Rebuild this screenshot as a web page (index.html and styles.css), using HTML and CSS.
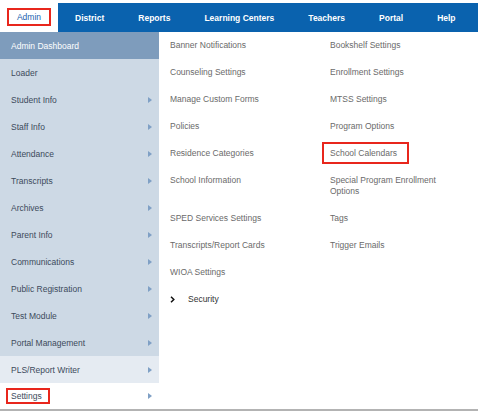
FILE: index.html
```html
<!DOCTYPE html>
<html lang="en">
<head>
<meta charset="utf-8">
<title>Admin Settings Menu</title>
<link rel="stylesheet" href="styles.css">
</head>
<body>
<div class="page">
  <nav class="topnav">
    <div class="tab-admin"><span class="hl hl-admin">Admin</span></div>
    <ul class="navbar">
      <li>District</li>
      <li>Reports</li>
      <li>Learning Centers</li>
      <li>Teachers</li>
      <li>Portal</li>
      <li>Help</li>
    </ul>
  </nav>
  <div class="menu">
    <ul class="side">
      <li class="side-item active">Admin Dashboard</li>
      <li class="side-item">Loader</li>
      <li class="side-item has-sub">Student Info<i class="tri"></i></li>
      <li class="side-item has-sub">Staff Info<i class="tri"></i></li>
      <li class="side-item has-sub">Attendance<i class="tri"></i></li>
      <li class="side-item has-sub">Transcripts<i class="tri"></i></li>
      <li class="side-item has-sub">Archives<i class="tri"></i></li>
      <li class="side-item has-sub">Parent Info<i class="tri"></i></li>
      <li class="side-item has-sub">Communications<i class="tri"></i></li>
      <li class="side-item has-sub">Public Registration<i class="tri"></i></li>
      <li class="side-item has-sub">Test Module<i class="tri"></i></li>
      <li class="side-item has-sub">Portal Management<i class="tri"></i></li>
      <li class="side-item has-sub light">PLS/Report Writer<i class="tri"></i></li>
      <li class="side-item has-sub white last"><span class="hl hl-settings">Settings</span><i class="tri"></i></li>
    </ul>
    <div class="panel">
      <div class="cell">Banner Notifications</div>
      <div class="cell">Counseling Settings</div>
      <div class="cell">Manage Custom Forms</div>
      <div class="cell">Policies</div>
      <div class="cell">Residence Categories</div>
      <div class="cell">School Information</div>
      <div class="cell">SPED Services Settings</div>
      <div class="cell">Transcripts/Report Cards</div>
      <div class="cell">WIOA Settings</div>
      <div class="cell security"><svg class="chev" width="5" height="7" viewBox="0 0 5 7"><path d="M1 0.8 L3.8 3.5 L1 6.2" fill="none" stroke="#111" stroke-width="1.5"/></svg>Security</div>
      <div class="cell">Bookshelf Settings</div>
      <div class="cell">Enrollment Settings</div>
      <div class="cell">MTSS Settings</div>
      <div class="cell">Program Options</div>
      <div class="cell"><span class="hl hl-cal">School Calendars</span></div>
      <div class="cell">Special Program Enrollment Options</div>
      <div class="cell">Tags</div>
      <div class="cell">Trigger Emails</div>
    </div>
  </div>
</div>
</body>
</html>
```
FILE: styles.css
```css
* { box-sizing: border-box; }
html, body { margin: 0; padding: 0; background: #fff; }
body {
  font-family: "Liberation Sans", Arial, Helvetica, sans-serif;
  font-size: 8.5px;
  width: 478px;
  height: 411px;
  overflow: hidden;
}
ul { list-style: none; margin: 0; padding: 0; }

.topnav {
  display: flex;
  height: 32px;
}
.tab-admin {
  width: 58px;
  display: flex;
  align-items: center;
  justify-content: center;
  padding-top: 3px;
  color: #2262b0;
}
.navbar {
  flex: 1;
  margin-top: 3px;
  height: 29px;
  background: #0a62ae;
  display: flex;
  align-items: center;
}
.navbar li {
  color: #fff;
  font-weight: bold;
  font-size: 8.5px;
  padding: 0 17px;
  white-space: nowrap;
}

.hl {
  position: relative;
  display: inline-block;
  line-height: 11px;
}
.hl::after {
  content: "";
  position: absolute;
  border: 2px solid #e8261c;
}
.hl-admin::after { left: -10px; right: -10px; top: -4px; bottom: -3px; }
.hl-settings::after { left: -5px; right: -8px; top: -3px; bottom: -2px; }
.hl-cal::after { left: -8px; right: -12px; top: -6px; bottom: -5px; }

.menu {
  display: flex;
  border-bottom: 2px solid #b3b3b3;
}
.side {
  width: 159px;
  background: #cdd9e5;
}
.side-item {
  height: 27px;
  display: flex;
  align-items: center;
  justify-content: space-between;
  padding: 0 7px 0 11px;
  color: #3c4a5b;
}
.side-item.active { background: #7e9cbc; color: #fff; }
.side-item.light { background: #e5ebf2; }
.side-item.white { background: #fff; }
.side-item.last { height: 26px; }
.tri {
  width: 0;
  height: 0;
  border-left: 4px solid #7fa0c5;
  border-top: 3px solid transparent;
  border-bottom: 3px solid transparent;
}

.panel {
  flex: 1;
  padding-left: 11px;
  display: grid;
  grid-template-columns: 160px 132px;
  grid-template-rows: repeat(10, auto);
  grid-auto-flow: column;
  align-content: start;
}
.cell {
  padding: 8px 0;
  line-height: 11px;
  color: #6a6a6a;
}
.security {
  display: flex;
  align-items: center;
  color: #333;
}
.chev { margin-right: 13px; }
```
